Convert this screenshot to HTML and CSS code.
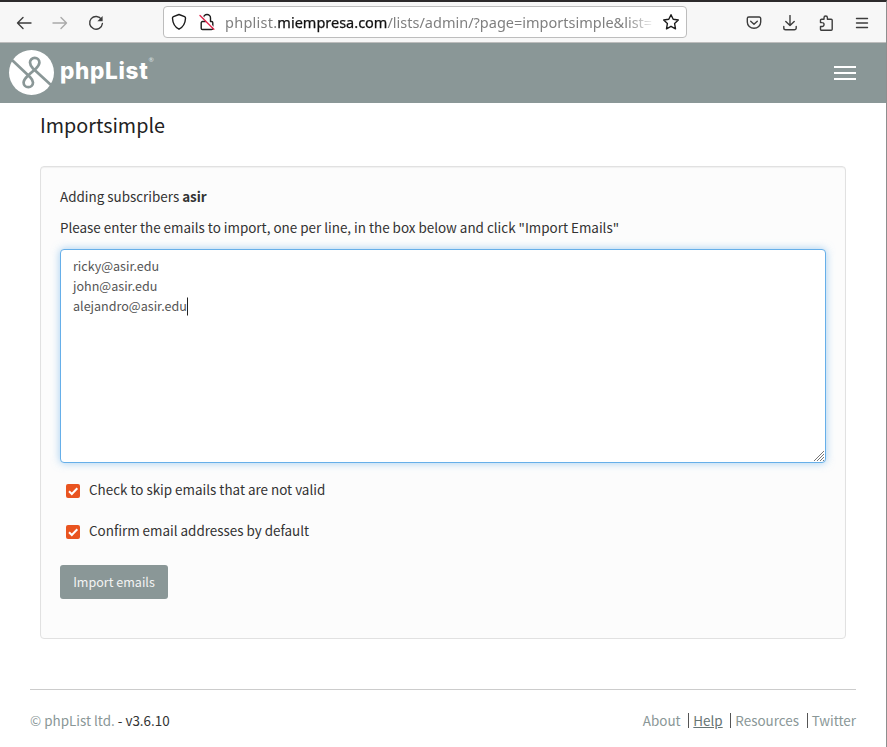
FILE: index.html
```html
<!DOCTYPE html>
<html lang="en">
<head>
<meta charset="utf-8">
<title>phpList</title>
<link rel="stylesheet" href="styles.css">
</head>
<body>
<div class="window">
  <div class="toolbar">
    <div class="nav-icons">
      <svg width="16" height="16" viewBox="0 0 16 16" class="ico"><path d="M15 8H1.500M7 2.500L1.500 8 7 13.500"/></svg>
      <svg width="16" height="16" viewBox="0 0 16 16" class="ico faded"><path d="M1 8h13.500M9 2.500L14.500 8 9 13.500"/></svg>
      <svg width="16" height="16" viewBox="0 0 16 16" class="ico"><path d="M13.500 4.500A6.400 6.400 0 1 0 14.400 8.500"/><path class="solid" d="M14.600 1v5.200H9.400z"/></svg>
    </div>
    <div class="urlbar">
      <svg width="16" height="18" viewBox="0 0 16 18" class="ico dark"><path d="M8 1.500L13.600 3.700Q14.700 4.200 14.500 5.500C14.200 10.800 12.300 14 8 16.200C3.700 14 1.800 10.800 1.500 5.500Q1.300 4.200 2.400 3.700Z"/></svg>
      <svg width="16" height="18" viewBox="0 0 16 18" class="ico dark lock"><path d="M4.500 5.500V5a3.500 3.500 0 0 1 7 0v3.500h1a1.300 1.300 0 0 1 1.300 1.300v5.400a1.300 1.300 0 0 1-1.300 1.300h-9a1.300 1.300 0 0 1-1.300-1.300V9.800a1.300 1.300 0 0 1 1.300-1.300h3"/><path class="slash-gap" d="M2 2L15 15"/><path class="slash" d="M1 2.500L14.800 16.300"/></svg>
      <div class="url"><span class="sub">phplist.</span><span class="domain">miempresa.com</span><span class="path">/lists/admin/?page=importsimple&amp;list=</span></div>
      <svg width="18" height="18" viewBox="0 0 18 18" class="ico dark star"><path d="M9 1.700L11.200 6.300 16.300 7 12.600 10.500 13.500 15.800 9 13.300 4.500 15.800 5.400 10.500 1.700 7 6.800 6.300Z"/></svg>
    </div>
    <div class="tool-icons">
      <svg width="16" height="16" viewBox="0 0 16 16" class="ico"><path d="M2.800 2h10.400a1.500 1.500 0 0 1 1.500 1.500V7a6.700 6.300 0 0 1-13.400 0V3.500A1.500 1.500 0 0 1 2.800 2zM4.700 6.200L8 9.300l3.300-3.100"/></svg>
      <svg width="16" height="16" viewBox="0 0 16 16" class="ico"><path d="M8 .500v10M3.800 6.500L8 10.600l4.200-4.100M1.800 11.500v1.500a1.800 1.800 0 0 0 1.800 1.800h8.800a1.800 1.800 0 0 0 1.800-1.800v-1.500"/></svg>
      <svg width="16" height="16" viewBox="0 0 16 16" class="ico"><path d="M2.500 7.500V5.200a1 1 0 0 1 1-1H6V2.700a1.700 1.700 0 0 1 3.400 0v1.500h3.800a1 1 0 0 1 1 1v9a1 1 0 0 1-1 1H3.500a1 1 0 0 1-1-1v-2.700h1.600a1.900 1.900 0 0 0 0-3.900z"/></svg>
      <svg width="16" height="16" viewBox="0 0 16 16" class="ico"><path d="M2.500 3.500h11M2.500 8h11M2.500 12.500h11"/></svg>
    </div>
  </div>
  <header class="header">
    <div class="brand">
      <svg width="46" height="46" viewBox="0 0 46 46"><circle cx="23.500" cy="22.500" r="22.500" fill="#fff"/><path class="knot" d="M4 10L22 27C24.500 29.500 25 31 25 32.500A4.700 4.700 0 0 1 15.600 32.500C15.600 30 17 28.500 20 25.500L28 18.500C30 16.500 31.400 15 31.400 12.600A4.700 4.700 0 0 0 22 12.600C22 15 23 16.500 25 18.500L43 35"/></svg>
      <span class="brand-name">phpList</span><span class="reg">®</span>
    </div>
    <div class="burger"><i></i><i></i><i></i></div>
  </header>
  <main class="main">
    <h1 class="title">Importsimple</h1>
    <section class="panel">
      <p class="line">Adding subscribers <b>asir</b></p>
      <p class="line">Please enter the emails to import, one per line, in the box below and click "Import Emails"</p>
      <div class="box">
        <div>ricky@asir.edu</div>
        <div>john@asir.edu</div>
        <div>alejandro@asir.edu<span class="caret"></span></div>
        <svg class="grip" width="12" height="12" viewBox="0 0 12 12"><path d="M1 11L11 1M4 11L11 4M7 11L11 7M10 11L11 10"/></svg>
      </div>
      <div class="check"><svg width="14" height="14" viewBox="0 0 14 14"><rect width="14" height="14" rx="2"/><path d="M3 7.300L5.800 10 11.300 4.300"/></svg><span>Check to skip emails that are not valid</span></div>
      <div class="check"><svg width="14" height="14" viewBox="0 0 14 14"><rect width="14" height="14" rx="2"/><path d="M3 7.300L5.800 10 11.300 4.300"/></svg><span>Confirm email addresses by default</span></div>
      <button class="btn">Import emails</button>
    </section>
  </main>
  <footer class="footer">
    <div><span class="muted">© phpList ltd.</span> - v3.6.10</div>
    <nav class="links"><a>About</a><a class="active">Help</a><a>Resources</a><a>Twitter</a></nav>
  </footer>
</div>
</body>
</html>
```

FILE: styles.css
```css
* { box-sizing: border-box; }
body {
  margin: 0;
  background: #fff;
  color: #333;
  font: 13.43px/20px "Noto Sans CJK SC", sans-serif;
  overflow: hidden;
}
p, h1 { margin: 0; }
svg { display: block; flex: none; }
.window { height: 747px; border-top: 2px solid #2c2a2b; border-right: 1px solid #8e8e8e; }
.toolbar {
  height: 41px;
  display: flex;
  align-items: center;
  background: #f7f7f7;
  border-bottom: 1px solid #bdbdbd;
  padding-left: 16px;
}
.nav-icons { display: flex; gap: 20px; width: 147px; }
.nav-icons svg, .tool-icons svg { margin-top: 1px; }
.ico { fill: none; stroke: #3d3d3d; stroke-width: 1.4; stroke-linecap: round; stroke-linejoin: round; }
.ico .solid { fill: #3d3d3d; stroke: none; }
.faded { stroke: #aaa; }
.dark { stroke: #1b1b1b; }
.ico .slash-gap { stroke: #fff; stroke-width: 1.5; }
.ico .slash { stroke: #e2284f; }
.lock { margin-left: 12px; }
.urlbar {
  width: 524px;
  height: 32px;
  display: flex;
  align-items: center;
  background: #fff;
  border: 1px solid #bdbdbd;
  border-radius: 4px;
  padding: 0 6px 0 7px;
}
.url {
  width: 431px;
  margin-left: 10px;
  overflow: hidden;
  white-space: nowrap;
  color: #808080;
  font: 14.5px/24px "Noto Sans", sans-serif;
  mask-image: linear-gradient(to right, #000 401px, transparent 431px);
}
.sub { letter-spacing: .25px; }
.domain { color: #111; -webkit-text-stroke: .25px #111; }
.star { margin-left: 6px; }
.tool-icons { display: flex; gap: 20px; margin-left: 59px; }
.header {
  height: 60px;
  display: flex;
  align-items: center;
  justify-content: space-between;
  background: #8a9797;
  padding: 0 30px 0 8px;
}
.brand { display: flex; color: #fff; }
.knot { fill: none; stroke: #8a9797; stroke-width: 2.7; }
.brand-name { margin-left: 6px; font: 800 22.5px/42px Inter, sans-serif; letter-spacing: .7px; white-space: nowrap; }
.reg { font: 6.5px/20px Lato, sans-serif; color: #dfe4e4; }
.burger { display: grid; gap: 4px; width: 22px; }
.burger i { height: 2px; background: #fff; }
.main { padding: 7px 40px 0; }
.title { font-size: 19.75px; line-height: 30px; font-weight: 400; color: #222; }
.panel {
  height: 473px;
  margin-top: 26px;
  padding: 19px;
  background: #fcfcfc;
  border: 1px solid #e1e1e1;
  border-radius: 4px;
  box-shadow: inset 0 1px 1px rgba(0,0,0,.05);
}
.line { margin-bottom: 11px; white-space: nowrap; }
.box {
  position: relative;
  height: 214px;
  margin-top: 12px;
  padding: 6px 12px;
  background: #fff;
  border: 1px solid #66afe9;
  border-radius: 4px;
  box-shadow: 0 0 8px rgba(102,175,233,.6);
  color: #555;
  font-size: 12.55px;
}
.caret { display: inline-block; width: 1px; height: 18px; background: #222; vertical-align: -4px; margin: -2px 0; transform: translateY(-1.5px); }
.grip { position: absolute; right: 0; bottom: 0; fill: none; stroke: #777; stroke-width: 1; }
.check { display: flex; align-items: center; gap: 9px; padding-left: 6px; margin-top: 16px; }
.check svg { margin-top: 3px; }
.check + .check { margin-top: 21px; }
.check rect { fill: #e95420; }
.check path { fill: none; stroke: #fff; stroke-width: 2; }
.btn {
  display: block;
  width: 108px;
  height: 34px;
  margin-top: 25px;
  padding: 0;
  border: 0;
  border-radius: 3px;
  background: #8a9797;
  color: #f3f3f3;
  font: 12.55px/20px "Noto Sans CJK SC", sans-serif;
}
.footer {
  display: flex;
  justify-content: space-between;
  margin: 50px 30px 0;
  padding-top: 20px;
  border-top: 1px solid #ccc;
}
.muted, .links { color: #8a9797; }
.links { display: flex; }
.links a + a { position: relative; margin-left: 7px; padding-left: 5.7px; }
.links a + a::before { content: ""; position: absolute; left: .5px; top: 3px; width: 1px; height: 15px; background: #555; }
.links .active { color: #667474; text-decoration: underline; }
```
